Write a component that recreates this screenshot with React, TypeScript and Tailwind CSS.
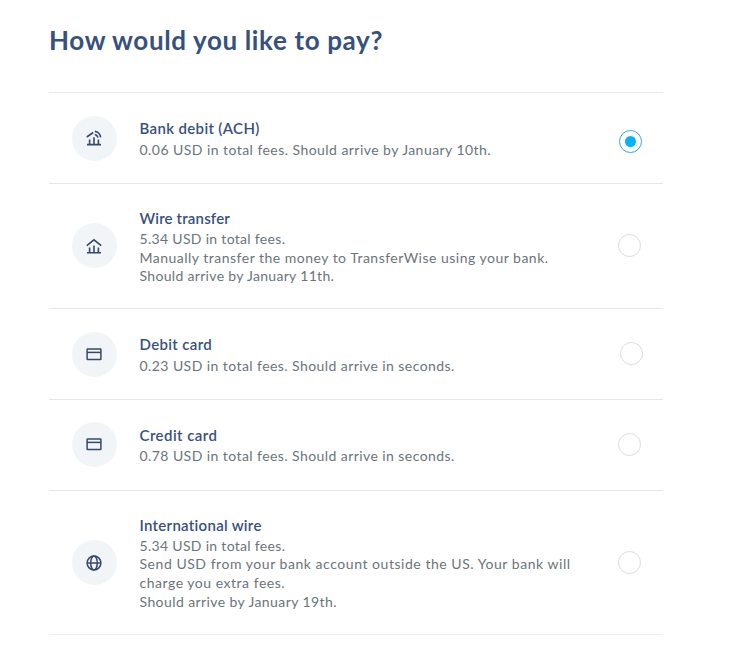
import React from 'react';

type Line = { text: string; tracking: string };

type Method = {
  title: string;
  titleClass: string;
  lines: Line[];
  icon: React.ReactNode;
  iconClass: string;
  height: string;
  textClass: string;
  radio: string;
};

const AchIcon = () => (
  <svg width="16" height="16" viewBox="0 0 16 16" fill="none" stroke="#37486d" strokeWidth="1.6">
    <path d="M1 14.6h14M3.6 14.3V9.4M8 14.3V7.2M12.4 14.3V9.4" />
    <path d="M.8 7 7.2 2.5M8.8 4.5a3.8 3.8 0 0 1 3 3.2M8.8 1.4a6.5 6.5 0 0 1 5.8 6" />
  </svg>
);

const BankIcon = () => (
  <svg width="16" height="16" viewBox="0 0 16 16" fill="none" stroke="#37486d" strokeWidth="1.6">
    <path d="M.8 7.6 8 1.8l7.2 5.8M1 14.8h14M3.6 14.6V9.6M8 14.6V7.4M12.4 14.6V9.6" />
  </svg>
);

const CardIcon = () => (
  <svg width="16" height="16" viewBox="0 0 16 16" fill="none" stroke="#37486d" strokeWidth="1.5">
    <rect x="1.1" y="2.9" width="13.8" height="10.6" rx=".5" />
    <path d="M1 6.4h14" />
  </svg>
);

const GlobeIcon = () => (
  <svg width="16" height="16" viewBox="0 0 16 16" fill="none" stroke="#37486d" strokeWidth="1.5">
    <circle cx="8" cy="8" r="6.9" />
    <ellipse cx="8" cy="8" rx="3.3" ry="6.9" />
    <path d="M1 8h14" />
  </svg>
);

const methods: Method[] = [
  {
    title: 'Bank debit (ACH)',
    titleClass: 'tracking-[0.35px] mb-[2px]',
    lines: [{ text: '0.06 USD in total fees. Should arrive by January 10th.', tracking: 'tracking-[0.45px]' }],
    icon: <AchIcon />,
    iconClass: '',
    height: 'h-[91px]',
    textClass: '',
    radio: 'mr-[21px] mt-[7px]',
  },
  {
    title: 'Wire transfer',
    titleClass: 'tracking-[0.17px] mb-px',
    lines: [
      { text: '5.34 USD in total fees.', tracking: 'tracking-[0.31px]' },
      { text: 'Manually transfer the money to TransferWise using your bank.', tracking: 'tracking-[0.49px]' },
      { text: 'Should arrive by January 11th.', tracking: 'tracking-[0.32px]' },
    ],
    icon: <BankIcon />,
    iconClass: 'mb-px',
    height: 'h-[125px]',
    textClass: 'pt-px',
    radio: 'mr-[22px] mb-px',
  },
  {
    title: 'Debit card',
    titleClass: 'tracking-[0.35px] mb-[2px]',
    lines: [{ text: '0.23 USD in total fees. Should arrive in seconds.', tracking: 'tracking-[0.43px]' }],
    icon: <CardIcon />,
    iconClass: '',
    height: 'h-[91px]',
    textClass: '',
    radio: 'mr-[20px] mb-px',
  },
  {
    title: 'Credit card',
    titleClass: 'tracking-[0.45px] mb-px',
    lines: [{ text: '0.78 USD in total fees. Should arrive in seconds.', tracking: 'tracking-[0.43px]' }],
    icon: <CardIcon />,
    iconClass: 'mb-[2px]',
    height: 'h-[91px]',
    textClass: 'pb-px',
    radio: 'mr-[22px] mb-[2px]',
  },
  {
    title: 'International wire',
    titleClass: 'tracking-[0.29px] mb-px',
    lines: [
      { text: '5.34 USD in total fees.', tracking: 'tracking-[0.31px]' },
      { text: 'Send USD from your bank account outside the US. Your bank will', tracking: 'tracking-[0.54px]' },
      { text: 'charge you extra fees.', tracking: 'tracking-[0.52px]' },
      { text: 'Should arrive by January 19th.', tracking: 'tracking-[0.41px]' },
    ],
    icon: <GlobeIcon />,
    iconClass: '',
    height: 'h-[144px]',
    textClass: '',
    radio: 'mr-[22px]',
  },
];

const App: React.FC = () => {
  const [selected, setSelected] = React.useState(0);

  return (
    <div className="min-h-screen bg-white pl-[49px] pt-[22px] font-['Lato',sans-serif]">
      <h1 className="h-[70px] text-[26px] leading-9 font-bold tracking-[0.64px] text-[#37517e] whitespace-nowrap">
        How would you like to pay?
      </h1>
      <div className="w-[614px] border-t border-[#e9eaeb]">
        {methods.map((m, i) => (
          <div
            key={m.title}
            onClick={() => setSelected(i)}
            className={`flex items-center border-b border-[#e6e7e8] last:border-[#efefef] pl-[23px] cursor-pointer ${m.height}`}
          >
            <div
              className={`w-[45px] h-[45px] shrink-0 rounded-full bg-[#f2f5f8] flex items-center justify-center pr-px ${m.iconClass}`}
            >
              {m.icon}
            </div>
            <div className={`ml-[22.5px] flex-1 whitespace-nowrap ${m.textClass}`}>
              <h2 className={`text-[15px] leading-[22px] font-semibold text-[#37517e] ${m.titleClass}`}>{m.title}</h2>
              {m.lines.map((line) => (
                <p key={line.text} className={`text-[14px] leading-[18.67px] text-[#6b757c] ${line.tracking}`}>
                  {line.text}
                </p>
              ))}
            </div>
            <div
              className={`w-[23px] h-[23px] shrink-0 rounded-full border flex items-center justify-center ${m.radio} ${
                selected === i ? 'border-[#36a9dc]' : 'border-[#dcdde0]'
              }`}
            >
              {selected === i && <span className="w-[11px] h-[11px] rounded-full bg-[#00b4f5]" />}
            </div>
          </div>
        ))}
      </div>
    </div>
  );
};

export default App;
